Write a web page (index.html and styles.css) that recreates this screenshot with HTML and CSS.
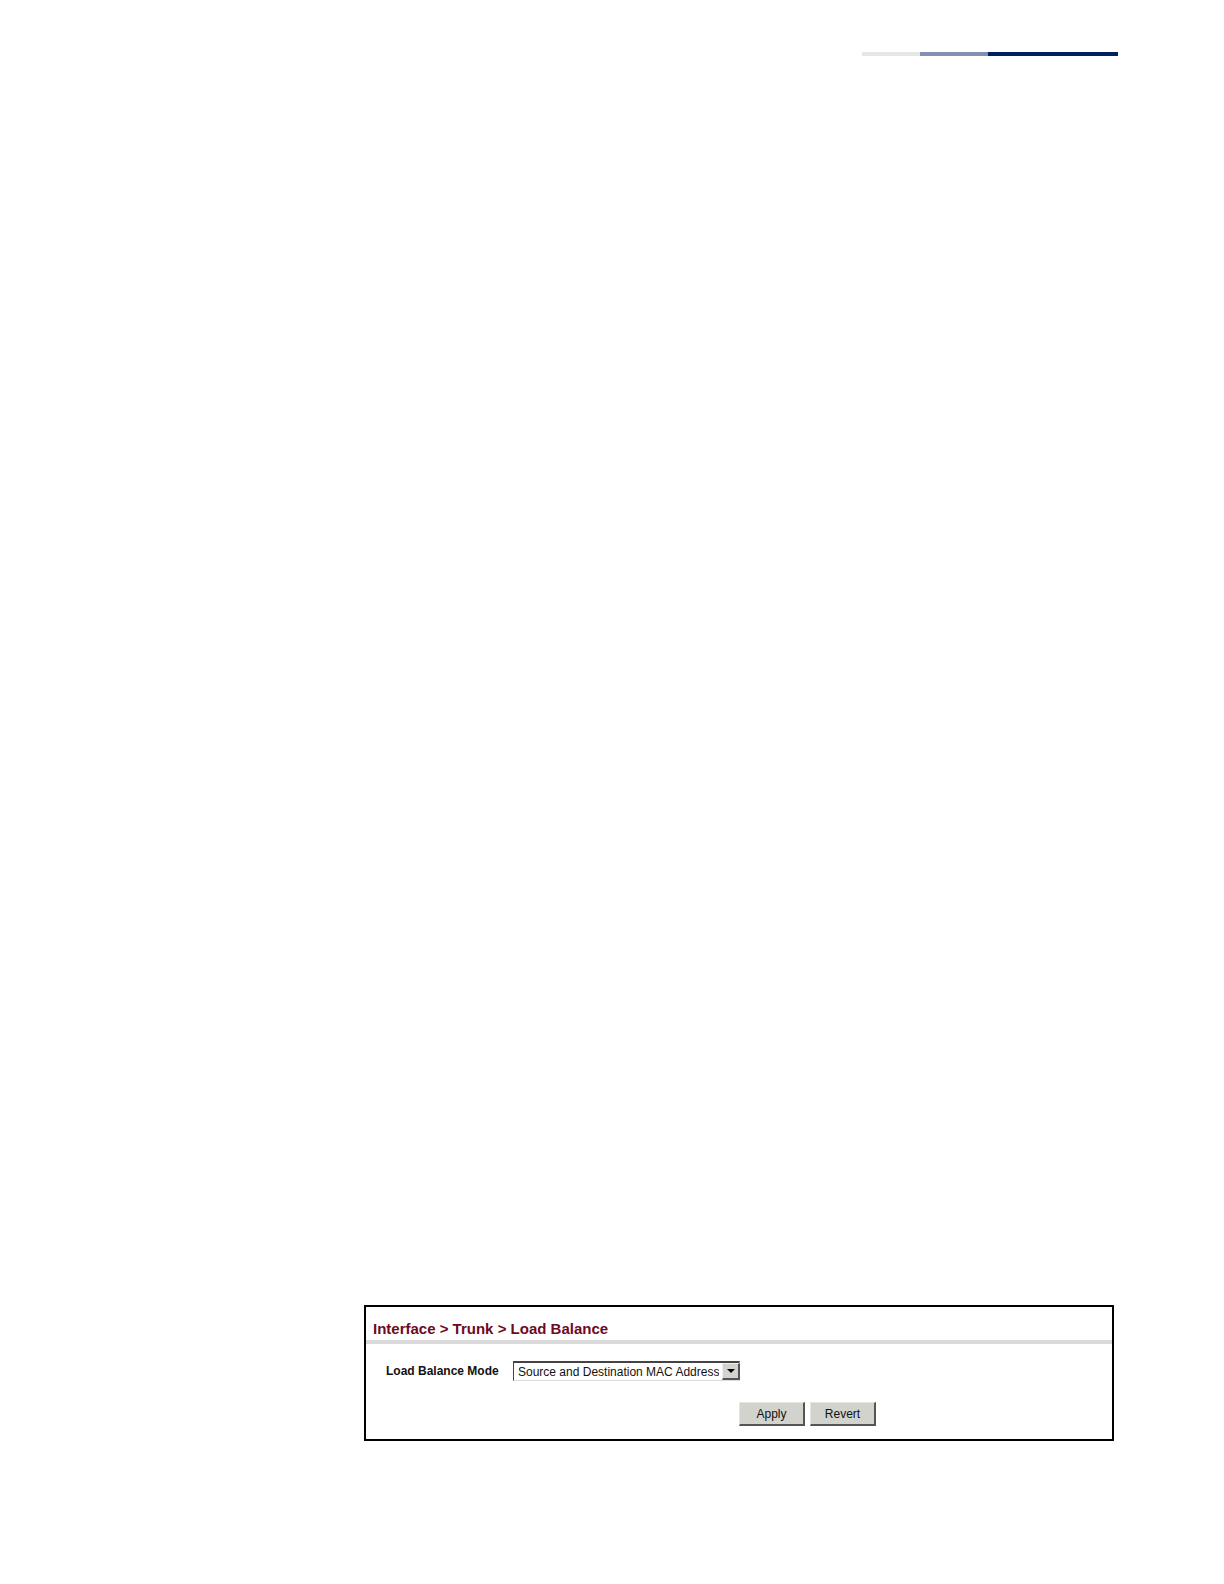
FILE: index.html
```html
<!DOCTYPE html>
<html lang="en">
<head>
    <meta charset="UTF-8">
    <meta name="viewport" content="width=device-width, initial-scale=1.0">
    <title>Load Balance</title>
    <link rel="stylesheet" href="styles.css">
</head>
<body>
    <header class="stripe">
        <div class="stripe-light"></div>
        <div class="stripe-mid"></div>
        <div class="stripe-dark"></div>
    </header>
    <main class="panel">
        <h1 class="title">Interface &gt; Trunk &gt; Load Balance</h1>
        <form>
            <div class="field">
                <label for="mode">Load Balance Mode</label>
                <div class="select-box">
                    <select id="mode">
                        <option>Source and Destination MAC Address</option>
                    </select>
                    <span class="arrow">
                        <svg width="8" height="4" viewBox="0 0 8 4" aria-hidden="true"><path d="M0 0h8L4 4z"/></svg>
                    </span>
                </div>
            </div>
            <div class="actions">
                <button type="button">Apply</button>
                <button type="reset">Revert</button>
            </div>
        </form>
    </main>
</body>
</html>
```

FILE: styles.css
```css
* {
    box-sizing: border-box;
}
body {
    display: flex;
    flex-direction: column;
    justify-content: space-between;
    min-height: 100vh;
    margin: 0;
    padding: 52px 106px 143px 364px;
    background: #fff;
    font-family: "Liberation Sans", Arial, sans-serif;
    font-size: 12px;
    color: #111;
}
.stripe {
    display: flex;
    justify-content: flex-end;
    height: 4px;
}
.stripe-light {
    width: 58px;
    background: #e6e7e8;
}
.stripe-mid {
    width: 68px;
    background: #8490b3;
}
.stripe-dark {
    width: 130px;
    background: #002060;
}
.panel {
    margin-right: 4px;
    border: 2px solid #000;
}
.title {
    margin: 0;
    padding: 14px 7px 3px;
    border-bottom: 4px solid #dadada;
    font-size: 15px;
    line-height: 16px;
    color: #6e0a1e;
}
form {
    padding: 17px 0 13px;
}
.field {
    display: flex;
    align-items: center;
    gap: 12px;
    padding-left: 20px;
}
.field label {
    width: 115px;
    font-weight: bold;
}
.select-box {
    position: relative;
}
select {
    appearance: none;
    display: block;
    width: 227px;
    height: 20px;
    padding: 0 20px 0 4px;
    border: 1px solid #dcdcdc;
    border-top: 2px solid #444;
    border-left-color: #444;
    border-radius: 0;
    background: #fff;
    font: inherit;
    color: inherit;
}
.arrow {
    position: absolute;
    top: 2px;
    right: 0;
    display: flex;
    align-items: center;
    justify-content: center;
    width: 18px;
    height: 17px;
    border: 1px solid #eee;
    border-right: 2px solid #555;
    border-bottom: 2px solid #555;
    background: #d2d3cd;
    pointer-events: none;
}
.actions {
    display: flex;
    gap: 5px;
    margin-top: 21px;
    padding-left: 50%;
}
button {
    width: 66px;
    height: 24px;
    padding: 0;
    border: 1px solid #e4e4e0;
    border-right: 2px solid #555;
    border-bottom: 2px solid #555;
    background: #d2d3cd;
    font: inherit;
    color: inherit;
}
```
